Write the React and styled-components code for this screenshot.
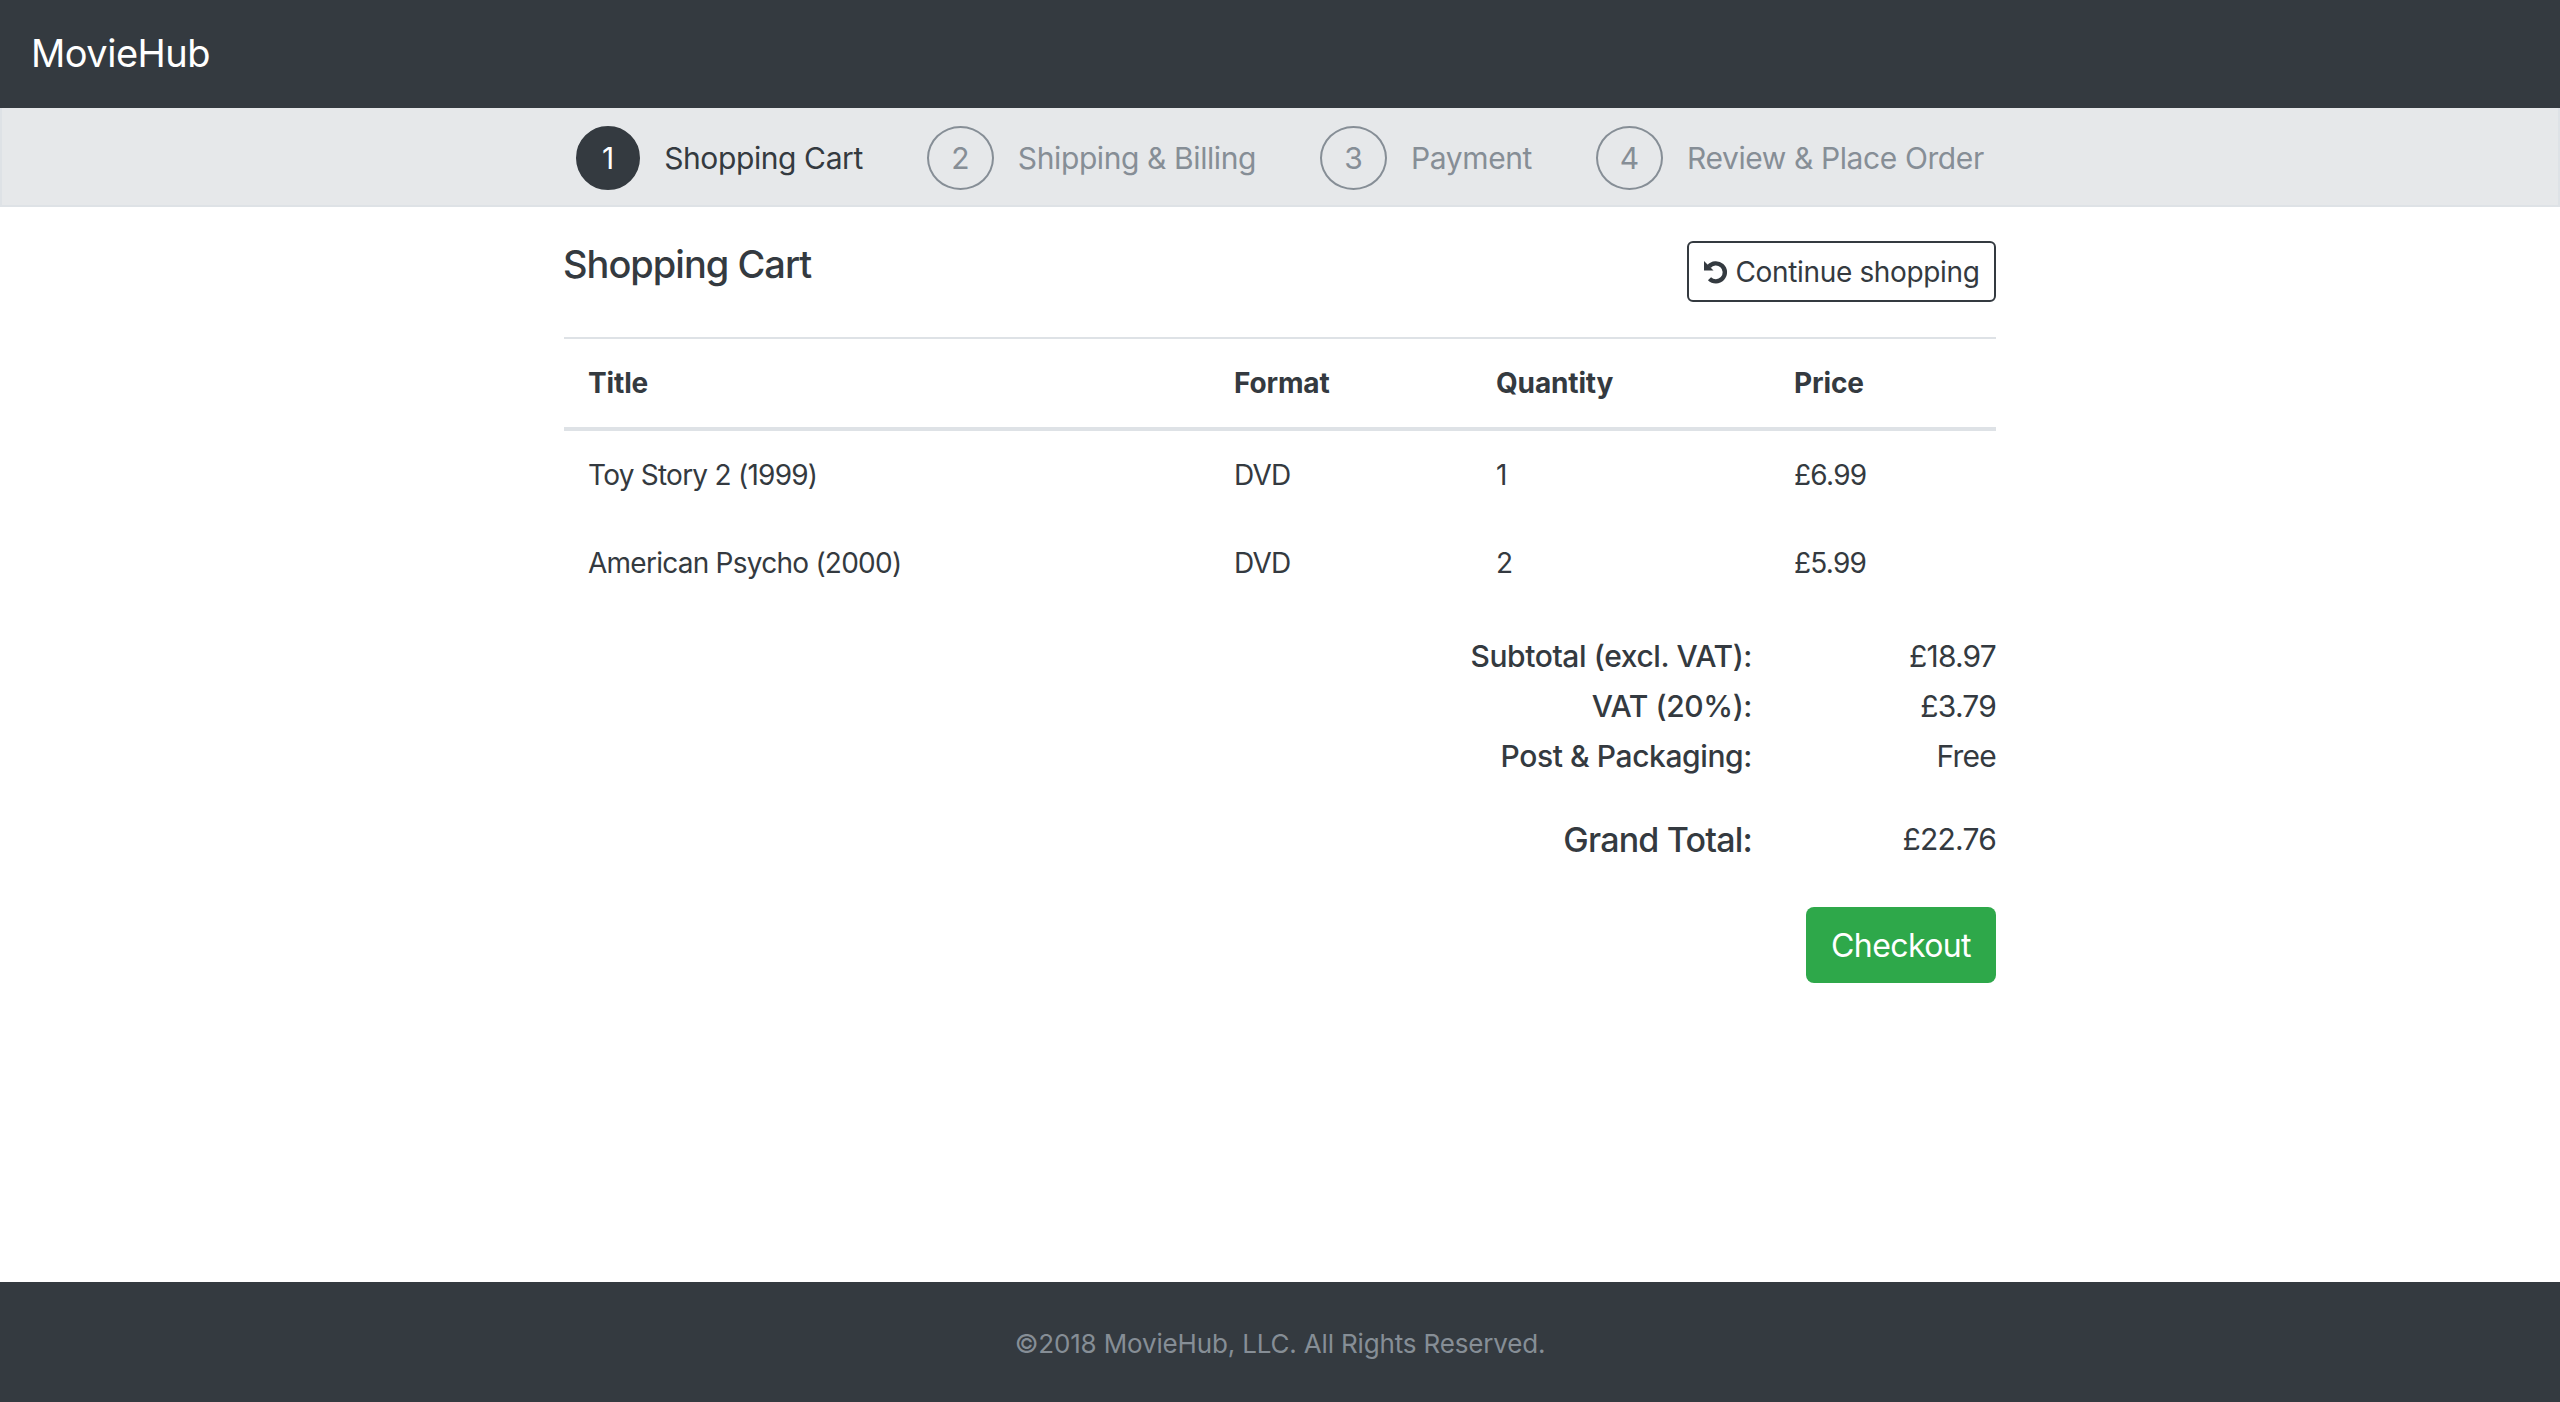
import styled, { createGlobalStyle } from "styled-components"

const GlobalStyle = createGlobalStyle`
    html, body {
        margin: 0;
        padding: 0;
        background: #fff;
    }
    body {
        font-family: "Inter", "Liberation Sans", sans-serif;
        color: #343a40;
    }
`;

const steps = ["Shopping Cart", "Shipping & Billing", "Payment", "Review & Place Order"];

const items = [
    { title: "Toy Story 2 (1999)", format: "DVD", quantity: 1, price: "£6.99" },
    { title: "American Psycho (2000)", format: "DVD", quantity: 2, price: "£5.99" },
];

const totals = [
    { label: "Subtotal (excl. VAT):", value: "£18.97" },
    { label: "VAT (20%):", value: "£3.79" },
    { label: "Post & Packaging:", value: "Free" },
];

const UndoIcon = () => (
    <svg width="24" height="24" viewBox="0 0 24 24">
        <path d="M0 1 L0 10.5 L9.5 10.5 Z" fill="currentColor" />
        <path d="M5 6.5 A 9 9 0 1 1 5.5 18.7" fill="none" stroke="currentColor" strokeWidth="4.4" />
    </svg>
);

export default function App() {
    return (
        <>
            <GlobalStyle />
            <Page>
                <Navbar>
                    <Brand>MovieHub</Brand>
                </Navbar>
                <Stepper>
                    {steps.map((step, i) => (
                        <Step key={step}>
                            <StepNumber $active={i === 0}>{i + 1}</StepNumber>
                            <StepLabel $active={i === 0}>{step}</StepLabel>
                        </Step>
                    ))}
                </Stepper>
                <Main>
                    <Container>
                        <Header>
                            <Heading>Shopping Cart</Heading>
                            <OutlineButton>
                                <UndoIcon />
                                Continue shopping
                            </OutlineButton>
                        </Header>
                        <CartTable>
                            <colgroup>
                                <col width="646" />
                                <col width="262" />
                                <col width="298" />
                                <col />
                            </colgroup>
                            <thead>
                                <tr>
                                    <HeadCell>Title</HeadCell>
                                    <HeadCell>Format</HeadCell>
                                    <HeadCell>Quantity</HeadCell>
                                    <HeadCell>Price</HeadCell>
                                </tr>
                            </thead>
                            <tbody>
                                {items.map(item => (
                                    <tr key={item.title}>
                                        <Cell>{item.title}</Cell>
                                        <Cell>{item.format}</Cell>
                                        <Cell>{item.quantity}</Cell>
                                        <Cell>{item.price}</Cell>
                                    </tr>
                                ))}
                            </tbody>
                        </CartTable>
                        <Totals>
                            {totals.map(row => (
                                <TotalRow key={row.label}>
                                    <TotalLabel>{row.label}</TotalLabel>
                                    <TotalValue>{row.value}</TotalValue>
                                </TotalRow>
                            ))}
                            <GrandRow>
                                <GrandLabel>Grand Total:</GrandLabel>
                                <TotalValue>£22.76</TotalValue>
                            </GrandRow>
                        </Totals>
                        <Actions>
                            <CheckoutButton>Checkout</CheckoutButton>
                        </Actions>
                    </Container>
                </Main>
                <Footer>©2018 MovieHub, LLC. All Rights Reserved.</Footer>
            </Page>
        </>
    )
};

const Page = styled.div`
    height: 1402px;
    display: flex;
    flex-direction: column;
`;

const Navbar = styled.nav`
    height: 108px;
    flex: none;
    background: #343a40;
    display: flex;
    align-items: center;
    padding: 0 31px 3px;
    box-sizing: border-box;
`;

const Brand = styled.a`
    color: #fff;
    font-size: 38px;
    font-weight: 400;
    letter-spacing: -0.5px;
`;

const Stepper = styled.div`
    height: 99px;
    flex: none;
    box-sizing: border-box;
    background: #e6e8ea;
    border: 2px solid #dee2e6;
    border-top: 0;
    display: flex;
    justify-content: center;
    align-items: center;
    gap: 64px;
    padding-top: 3px;
`;

const Step = styled.div`
    display: flex;
    align-items: center;
    gap: 24px;
`;

const StepNumber = styled.span`
    width: ${props => props.$active ? "64px" : "67px"};
    height: 64px;
    box-sizing: border-box;
    border-radius: 50%;
    display: flex;
    align-items: center;
    justify-content: center;
    font-size: 30px;
    color: ${props => props.$active ? "#fff" : "#868e96"};
    background: ${props => props.$active ? "#343a40" : "transparent"};
    border: 2px solid ${props => props.$active ? "#343a40" : "#868e96"};
`;

const StepLabel = styled.span`
    font-size: 30px;
    letter-spacing: -0.4px;
    color: ${props => props.$active ? "#343a40" : "#868e96"};
`;

const Main = styled.main`
    flex: 1;
    display: flex;
    justify-content: center;
`;

const Container = styled.div`
    width: 1432px;
`;

const Header = styled.div`
    display: flex;
    justify-content: space-between;
    align-items: flex-start;
    padding-top: 34px;
    height: 132px;
    box-sizing: border-box;
    border-bottom: 2px solid #dee2e6;
`;

const Heading = styled.h1`
    margin: 0 0 0 -1px;
    font-size: 38px;
    line-height: 46px;
    font-weight: 500;
    letter-spacing: -1px;
    color: #343a40;
`;

const OutlineButton = styled.button`
    width: 309px;
    height: 61px;
    background: #fff;
    border: 2px solid #343a40;
    border-radius: 6px;
    color: #343a40;
    font: inherit;
    font-size: 28px;
    letter-spacing: -0.35px;
    display: flex;
    align-items: center;
    justify-content: center;
    gap: 8px;
    padding: 0;
`;

const CartTable = styled.table`
    width: 100%;
    border-collapse: collapse;
    table-layout: fixed;
`;

const HeadCell = styled.th`
    height: 88px;
    padding: 0 24px;
    text-align: left;
    font-size: 28px;
    font-weight: 700;
    letter-spacing: -0.15px;
    color: #343a40;
    border-bottom: 4px solid #dee2e6;
`;

const Cell = styled.td`
    height: 88px;
    padding: 0 24px;
    font-size: 28px;
    letter-spacing: -0.75px;
    color: #343a40;
`;

const Totals = styled.div`
    margin-top: 24px;
    display: flex;
    flex-direction: column;
`;

const TotalRow = styled.div`
    height: 50px;
    display: flex;
    justify-content: flex-end;
    align-items: center;
    font-size: 30px;
`;

const TotalLabel = styled.span`
    font-weight: 500;
    letter-spacing: -0.4px;
`;

const TotalValue = styled.span`
    width: 244px;
    text-align: right;
    letter-spacing: -0.8px;
`;

const GrandRow = styled(TotalRow)`
    height: 66px;
    margin-top: 25px;
`;

const GrandLabel = styled.span`
    font-size: 34px;
    font-weight: 500;
    letter-spacing: -0.8px;
`;

const Actions = styled.div`
    display: flex;
    justify-content: flex-end;
    margin-top: 35px;
`;

const CheckoutButton = styled.button`
    width: 190px;
    height: 76px;
    border: 0;
    border-radius: 8px;
    background: #2ea84a;
    color: #fff;
    font: inherit;
    font-size: 32px;
    letter-spacing: -0.6px;
    padding: 0;
`;

const Footer = styled.footer`
    height: 120px;
    flex: none;
    background: #343a40;
    color: #868e96;
    font-size: 26px;
    letter-spacing: -0.16px;
    padding-top: 2px;
    box-sizing: border-box;
    display: flex;
    align-items: center;
    justify-content: center;
`;
